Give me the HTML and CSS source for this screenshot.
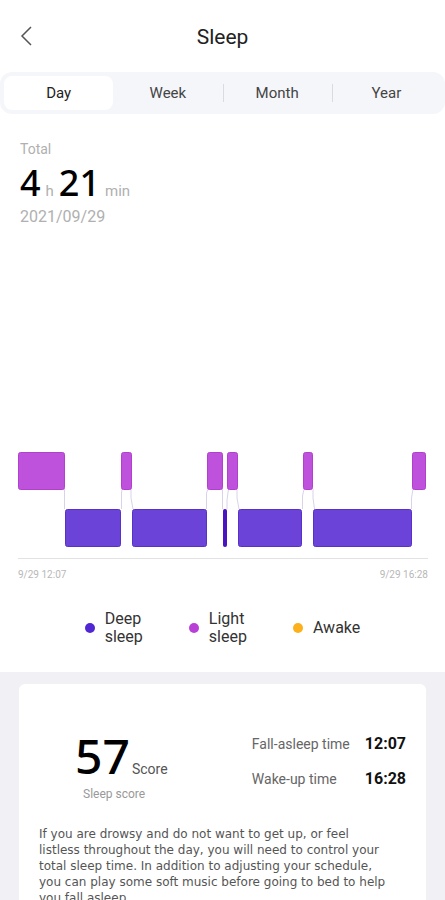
FILE: index.html
```html
<!DOCTYPE html>
<html lang="en">
<head>
    <meta charset="utf-8"/>
    <meta name="viewport" content="width=device-width, initial-scale=1">
    <title>Sleep</title>
    <link rel="stylesheet" href="styles.css">
</head>
<body>
<header class="topbar">
    <button class="back" type="button" aria-label="Back">
        <svg width="12" height="20" viewBox="0 0 12 20" fill="none" stroke="#555" stroke-width="1.5">
            <path d="M11 1 L2 10 L11 19"/>
        </svg>
    </button>
    <h1>Sleep</h1>
</header>

<nav class="tabs">
    <button class="tab active" type="button">Day</button>
    <button class="tab" type="button">Week</button>
    <button class="tab" type="button">Month</button>
    <button class="tab" type="button">Year</button>
</nav>

<main>
    <section class="summary">
        <div class="label">Total</div>
        <div class="total"><b>4</b> <span>h</span> <b>21</b> <span>min</span></div>
        <div class="date">2021/09/29</div>
    </section>

    <section class="chart">
        <svg class="stages" viewBox="0 0 410 96" role="img" aria-label="Sleep stages">
            <g class="links">
                <path d="M46.500 37V57M103.500 57V41L104 37M113 37V46L115 57M188.500 57V41L190 37M204.500 37V57M209 57V48L210.500 37M219 37V46L221 57M284.500 57V44L286 37M295 37V46L296.500 57M393.500 57V46L395 37"/>
            </g>
            <g class="light">
                <rect x="0.500" y="0.500" width="46" height="37" rx="2"/>
                <rect x="103.500" y="0.500" width="10" height="37" rx="2"/>
                <rect x="189.500" y="0.500" width="15" height="37" rx="2"/>
                <rect x="209.500" y="0.500" width="10" height="37" rx="2"/>
                <rect x="285.500" y="0.500" width="9" height="37" rx="2"/>
                <rect x="394.500" y="0.500" width="13" height="37" rx="2"/>
            </g>
            <g class="deep">
                <rect x="47.500" y="57.500" width="55" height="37" rx="2"/>
                <rect x="114.500" y="57.500" width="74" height="37" rx="2"/>
                <rect class="short" x="205.500" y="57.500" width="3" height="37" rx="1"/>
                <rect x="220.500" y="57.500" width="63" height="37" rx="2"/>
                <rect x="295.500" y="57.500" width="98" height="37" rx="2"/>
            </g>
        </svg>
        <div class="axis">
            <span>9/29 12:07</span>
            <span>9/29 16:28</span>
        </div>
    </section>

    <ul class="legend">
        <li><i class="dot dot-deep"></i><span>Deep<br>sleep</span></li>
        <li><i class="dot dot-light"></i><span>Light<br>sleep</span></li>
        <li><i class="dot dot-awake"></i><span>Awake</span></li>
    </ul>
</main>

<div class="details">
    <section class="card">
        <div class="stats">
            <div class="score">
                <div class="score-value"><b>57</b> <span>Score</span></div>
                <div class="score-label">Sleep score</div>
            </div>
            <dl class="times">
                <dt>Fall-asleep time</dt>
                <dd>12:07</dd>
                <dt>Wake-up time</dt>
                <dd>16:28</dd>
            </dl>
        </div>
        <p class="advice">
            If you are drowsy and do not want to get up, or feel<br>
            listless throughout the day, you will need to control your<br>
            total sleep time. In addition to adjusting your schedule,<br>
            you can play some soft music before going to bed to help<br>
            you fall asleep.
        </p>
    </section>
</div>
</body>
</html>
```
FILE: styles.css
```css
* {
    box-sizing: border-box;
}

body {
    margin: 0;
    background: #fff;
    color: #222;
    font-family: Roboto, "Noto Sans", sans-serif;
}

button {
    border: 0;
    padding: 0;
    background: none;
    color: inherit;
    font: inherit;
}

.topbar {
    display: grid;
    grid-template-columns: 52px 1fr 52px;
    align-items: center;
    height: 72px;
}

.back {
    display: flex;
    align-items: center;
    height: 40px;
    padding-left: 20px;
}

h1 {
    margin: 0;
    padding-top: 2px;
    text-align: center;
    font-size: 21px;
    line-height: 28px;
    font-weight: 400;
}

.tabs {
    display: flex;
    padding: 4px;
    border-radius: 12px;
    background: #f5f6fa;
}

.tab {
    flex: 1;
    height: 34px;
    font-size: 15px;
    color: #444;
}

.tab.active {
    border-radius: 8px;
    background: #fff;
    color: #222;
}

.tab:nth-child(n+3) {
    background: linear-gradient(#d9dbe0, #d9dbe0) left center / 1px 18px no-repeat;
}

.summary {
    padding: 25px 20px 0;
    color: #b0b0b0;
}

.label {
    font-size: 14px;
    line-height: 20px;
}

.total {
    display: flex;
    align-items: baseline;
    gap: 5px;
    font-size: 15px;
    line-height: 16px;
}

.total b {
    color: #000;
    font: 500 36px/48px "Noto Sans", sans-serif;
}

.date {
    font-size: 16px;
    line-height: 20px;
}

.chart {
    margin-top: 225px;
    padding: 0 17px 0 18px;
}

.stages {
    display: block;
    width: 100%;
}

.links {
    fill: none;
    stroke: #d9d3ea;
}

.light {
    fill: #bf52dc;
    stroke: #b23fce;
}

.deep {
    fill: #6b43d8;
    stroke: #5731c8;
}

.short {
    fill: #4a14c0;
    stroke: #4a14c0;
}

.axis {
    display: flex;
    justify-content: space-between;
    margin-top: 10px;
    padding: 10px 0;
    border-top: 1px solid #e2e2e4;
    color: #b8b8b8;
    font-size: 10px;
    line-height: 12px;
}

.legend {
    display: flex;
    justify-content: center;
    gap: 46px;
    margin: 0;
    padding: 19px 0 26px;
    list-style: none;
    color: #333;
    font-size: 16px;
    line-height: 18px;
}

.legend li {
    display: flex;
    align-items: center;
    gap: 10px;
}

.dot {
    width: 10px;
    height: 10px;
    border-radius: 50%;
}

.dot-deep {
    background: #5126d3;
}

.dot-light {
    background: #b840d6;
}

.dot-awake {
    background: #fbb01c;
}

.details {
    padding: 12px 19px;
    background: #f0f0f5;
}

.card {
    padding: 44px 20px 20px;
    border-radius: 6px;
    background: #fff;
}

.stats {
    display: flex;
    justify-content: space-between;
    padding-left: 36px;
}

.score-value {
    display: flex;
    align-items: baseline;
    gap: 2px;
    color: #555;
    font-size: 14px;
    line-height: 16px;
}

.score-value b {
    color: #000;
    font: 500 48px/56px "Noto Sans", sans-serif;
}

.score-label {
    padding-left: 8px;
    color: #999;
    font-size: 12px;
    line-height: 20px;
}

.times {
    display: grid;
    grid-template-columns: auto auto;
    gap: 15px;
    align-content: start;
    margin: 0;
    padding-top: 6px;
    line-height: 20px;
}

.times dt {
    color: #666;
    font-size: 14px;
}

.times dd {
    margin: 0;
    color: #111;
    font-size: 16px;
    font-weight: 700;
}

.advice {
    margin: 22px 0 0;
    color: #555;
    font: 12px/16px "DejaVu Sans", sans-serif;
}
```
